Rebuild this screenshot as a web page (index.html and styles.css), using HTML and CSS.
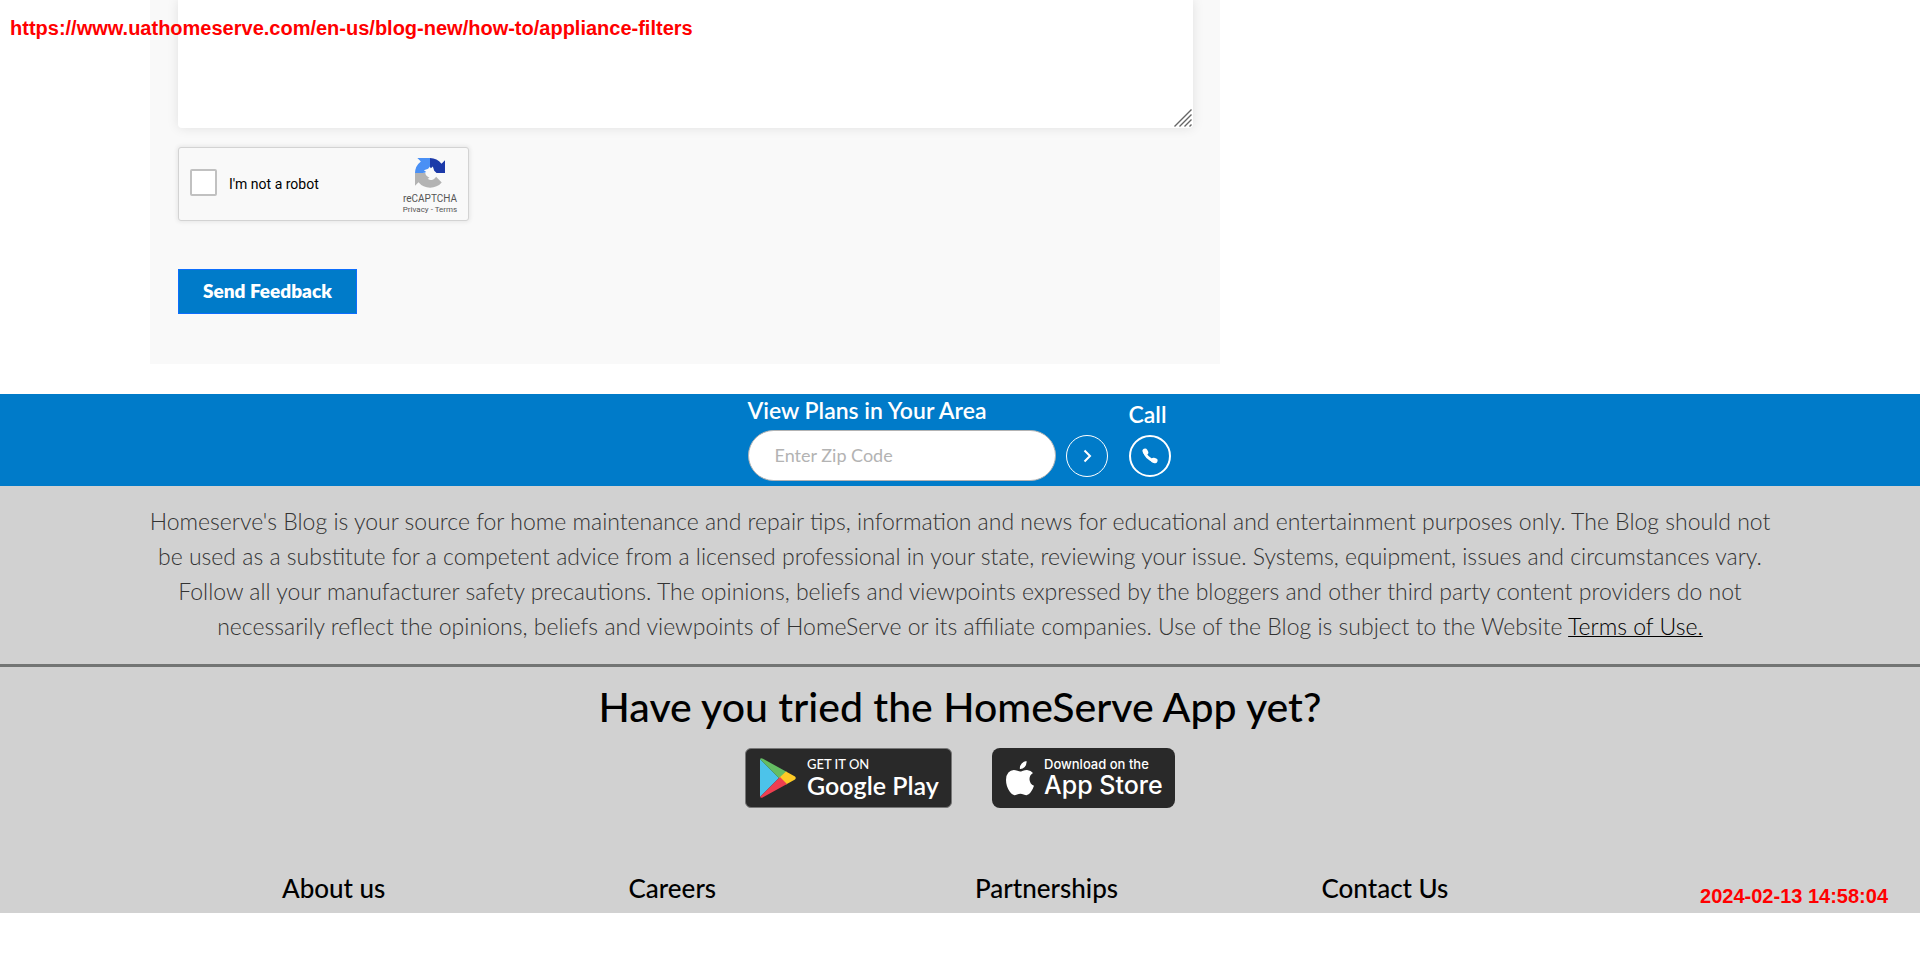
FILE: index.html
```html
<!DOCTYPE html>
<html lang="en">
<head>
<meta charset="utf-8">
<title>Appliance Filters | HomeServe</title>
<link rel="stylesheet" href="styles.css">
</head>
<body>
<p class="stamp stamp-url">https://www.uathomeserve.com/en-us/blog-new/how-to/appliance-filters</p>
<main class="content">
  <form class="feedback">
    <div class="message-wrap">
      <textarea class="message" aria-label="Feedback"></textarea>
      <svg class="grip" viewBox="0 0 18 18" aria-hidden="true"><path d="M0.5 17.5 17.5 0.5M5.5 17.5l12-12M10.500 17.500l7-7M15.500 17.500l2-2" stroke="#666" stroke-width="1.400" fill="none"/></svg>
    </div>
    <div class="captcha">
      <input class="captcha-box" type="checkbox" id="robot">
      <label class="captcha-label" for="robot">I'm not a robot</label>
      <div class="captcha-brand">
        <svg class="captcha-logo" viewBox="0 0 64 64" aria-hidden="true">
          <path fill="#1c3aa9" d="M64 32V5l-7.500 7.500A32 32 0 0 0 32 0v15c-.7 3 .5 5.500 2 7l4-4 3 9 5 5z"/>
          <path fill="#4a90f5" d="M32 0H5l7.500 7.500A32 32 0 0 0 0 32h17c3 0 5-1 7-2l-5-4 9-3 4-5z"/>
          <path fill="#b3b3b3" d="M0 32v27l7.500-7.500A32 32 0 0 0 57 52L45 40c-2 3-5 6-9 7-4 0-7-1-9-3l4-2c-5-2-9-6-9-10z"/>
        </svg>
        <span class="captcha-name">reCAPTCHA</span>
        <span class="captcha-links"><a href="#">Privacy</a> - <a href="#">Terms</a></span>
      </div>
    </div>
    <button class="send" type="button">Send Feedback</button>
  </form>
</main>
<section class="plans">
  <form class="zip">
    <label class="plans-title" for="zip">View Plans in Your Area</label>
    <div class="zip-row">
      <input class="zip-input" id="zip" type="text" placeholder="Enter Zip Code">
      <button class="round" type="button" aria-label="Go"><svg class="round-icon" viewBox="0 0 20 20"><path d="M7.500 4.500 13 10l-5.500 5.500" fill="none" stroke="#fff" stroke-width="2"/></svg></button>
    </div>
  </form>
  <div class="call">
    <span class="plans-title">Call</span>
    <a class="round round-bold" href="#" aria-label="Call"><svg class="round-icon" viewBox="0 0 20 20"><path fill="none" stroke="#fff" stroke-width="3" stroke-linecap="round" d="M4.500 5.500Q6 12.500 14.500 15"/><path fill="none" stroke="#fff" stroke-width="5" stroke-linecap="round" d="m5 5 .8 1.500M13.500 14.300l1.600.4"/></svg></a>
  </div>
</section>
<footer class="footer">
  <p class="disclaimer">Homeserve's Blog is your source for home maintenance and repair tips, information and news for educational and entertainment purposes only. The Blog should not<br> be used as a substitute for a competent advice from a licensed professional in your state, reviewing your issue. Systems, equipment, issues and circumstances vary.<br> Follow all your manufacturer safety precautions. The opinions, beliefs and viewpoints expressed by the bloggers and other third party content providers do not<br> necessarily reflect the opinions, beliefs and viewpoints of HomeServe or its affiliate companies. Use of the Blog is subject to the Website <a class="terms" href="#">Terms of Use.</a></p>
  <section class="apps">
    <h2 class="apps-title">Have you tried the HomeServe App yet?</h2>
    <div class="badges">
      <a class="badge badge-google" href="#">
        <svg class="play" viewBox="0 0 36 40" aria-hidden="true">
          <path fill="#4cc3ea" d="M0 1v38l19-19z"/>
          <path fill="#65bd63" d="M0 1Q1-.5 3 .8L27 14l-7 7z"/>
          <path fill="#fdca26" d="m26 13.500 9 5q1.500 1.500 0 3l-9 5-7-6.500z"/>
          <path fill="#ee3f50" d="M0 39q1 1.500 3 .2L27 26l-7-7z"/>
        </svg>
        <span class="badge-text"><span class="badge-small">GET IT ON</span><span class="badge-big">Google Play</span></span>
      </a>
      <a class="badge badge-apple" href="#">
        <svg class="apple" viewBox="0 0 28 35" aria-hidden="true"><path fill="#fff" d="M20.500 0q.4 3.400-1.800 5.900-2.100 2.300-4.800 2.100-.4-3 1.800-5.500Q17.700.4 20.500 0zM27 12.100q-3.600 2.300-3.500 6.100.1 4.600 4.500 6.500-1.100 3.500-3.300 6.500-2 2.900-4.200 3-1.300 0-2.900-.7-1.700-.7-3.200-.7-1.600 0-3.300.7-1.500.7-2.600.8-2.200.1-4.500-3.200Q0 25.400 0 18.900q0-4.500 2.400-7.300 2.200-2.600 5.400-2.700 1.500 0 3.600.9 2 .8 2.700.8.600 0 2.900-.9 2.200-.8 4.100-.7 3.900.3 5.900 3.100z"/></svg>
        <span class="badge-text"><span class="badge-small">Download on the</span><span class="badge-big">App Store</span></span>
      </a>
    </div>
  </section>
  <nav class="links">
    <a class="link" href="#">About us</a>
    <a class="link" href="#">Careers</a>
    <a class="link" href="#">Partnerships</a>
    <a class="link" href="#">Contact Us</a>
  </nav>
  <p class="stamp stamp-date">2024-02-13 14:58:04</p>
</footer>
</body>
</html>
```
FILE: styles.css
```css
* { box-sizing: border-box; }
body { margin: 0; background: #fff; font-family: Lato, "Open Sans", sans-serif; color: #000; }
a { color: inherit; text-decoration: none; }
.stamp { position: absolute; margin: 0; color: #f00; font: bold 20px/24px "Liberation Sans", Arial, sans-serif; white-space: nowrap; }
.stamp-url { top: 16px; left: 10px; z-index: 1; }
.stamp-date { right: 32px; bottom: 5px; }

.content { padding: 0 700px 0 150px; }
.feedback { padding: 0 27px 50px 28px; background: #f9f9f9; }
.message-wrap { position: relative; }
.message { display: block; width: 100%; height: 128px; padding: 16px; border: 0; border-radius: 0 0 4px 4px; background: #fff; box-shadow: 0 0 12px rgba(0, 0, 0, .1); resize: none; outline: 0; }
.grip { position: absolute; right: 1px; bottom: 1px; width: 18px; height: 18px; }
.captcha { display: flex; align-items: center; width: 291px; height: 74px; margin-top: 19px; padding: 0 6px 0 11px; border: 1px solid #d3d3d3; border-radius: 3px; background: #f9f9f9; box-shadow: 0 0 4px 1px rgba(0, 0, 0, .08); font-family: Roboto, sans-serif; }
.captcha-box { appearance: none; width: 27px; height: 27px; margin: 0 12px 4px 0; border: 2px solid #c1c1c1; border-radius: 2px; background: #fff; }
.captcha-label { flex: 1; font-size: 14px; line-height: 18px; }
.captcha-brand { display: flex; flex-direction: column; align-items: center; width: 64px; padding-top: 4px; color: #555; }
.captcha-logo { width: 30px; height: 30px; margin-bottom: 5px; }
.captcha-name { font-size: 10px; line-height: 12px; }
.captcha-links { font-size: 8px; line-height: 10px; white-space: nowrap; }
.send { display: block; height: 45px; margin-top: 48px; padding: 0 24px 2px; border: 1px solid #0d6efd; background: #007bc9; color: #fff; font: 800 19px/24px Lato, sans-serif; }

.plans { display: flex; justify-content: center; gap: 21px; margin-top: 30px; padding: 0 2px 5px 0; background: #007bc9; color: #fff; }
.zip { padding-top: 2px; }
.plans-title { display: block; font-size: 23px; font-weight: 600; line-height: 28px; }
.zip-row { display: flex; align-items: center; gap: 10px; margin-top: 6px; }
.zip-input { width: 308px; height: 51px; padding: 0 26px 2px; border: 1px solid #b3b3b3; border-radius: 26px; background: #fff; font: 400 18px/24px Lato, sans-serif; outline: 0; }
.zip-input::placeholder { color: #b3b3b3; opacity: 1; }
.round { display: flex; align-items: center; justify-content: center; width: 42px; height: 42px; padding: 0; border: 1px solid #fff; border-radius: 50%; background: none; }
.round-bold { border-width: 2px; margin-top: 7px; }
.round-icon { width: 20px; height: 20px; }
.call { padding-top: 6px; }

.footer { position: relative; background: #d1d1d1; }
.disclaimer { margin: 0; padding: 18px 100px 20px; border-bottom: 3px solid #737574; color: #333; font-size: 23px; font-weight: 300; line-height: 35px; text-align: center; }
.terms { color: #000; text-decoration: underline; text-decoration-thickness: 1px; }
.apps { padding-top: 16px; }
.apps-title { margin: 0; font-size: 41px; font-weight: 500; line-height: 48px; text-align: center; }
.badges { display: flex; justify-content: center; gap: 40px; margin-top: 17px; }
.badge { display: flex; align-items: center; height: 60px; border-radius: 8px; background: #292929; color: #fff; }
.badge-google { width: 207px; padding-left: 14px; gap: 11px; border: 1px solid #777; border-radius: 6px; }
.badge-apple { width: 183px; padding-left: 14px; gap: 10px; font-family: Inter, sans-serif; }
.play { width: 36px; height: 40px; }
.apple { width: 28px; height: 35px; }
.badge-text { display: flex; flex-direction: column; padding-bottom: 2px; white-space: nowrap; }
.badge-small { font-size: 13px; font-weight: 500; line-height: 15px; }
.badge-big { font-size: 25px; font-weight: 500; line-height: 26px; }
.badge-google .badge-big { font-weight: 600; }
.links { display: grid; grid-template-columns: repeat(4, 1fr); margin-top: 64px; padding: 0 252px 8px 282px; }
.link { font-size: 26px; font-weight: 500; line-height: 33px; }
```
